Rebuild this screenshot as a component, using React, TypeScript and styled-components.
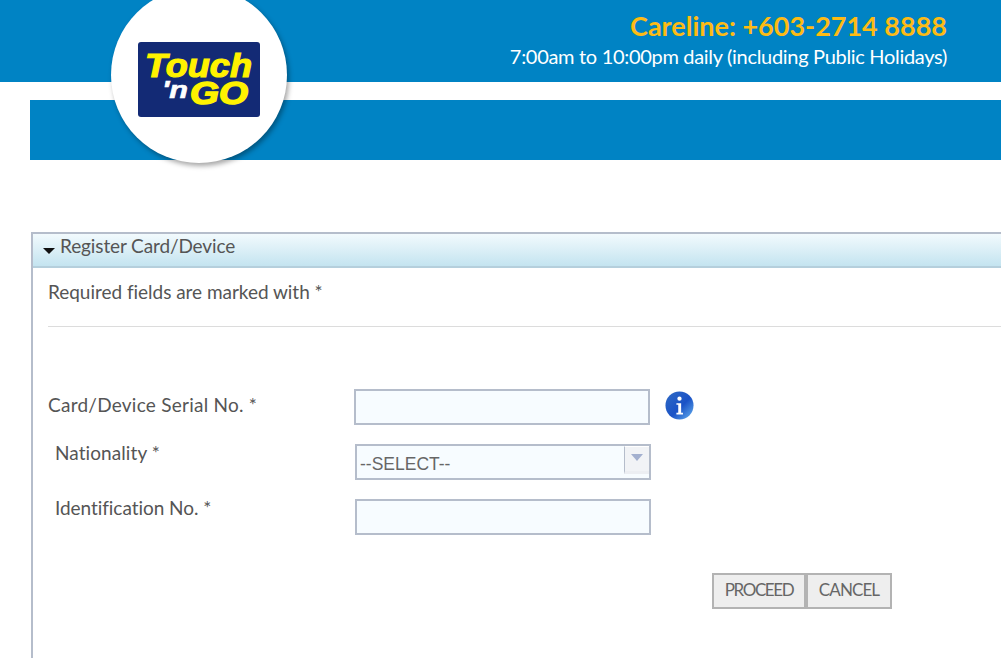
import * as React from 'react';
import styled, { createGlobalStyle } from 'styled-components';

const GlobalStyle = createGlobalStyle`
  html, body {
    margin: 0;
    padding: 0;
    background: #fff;
    overflow: hidden;
  }
`;

const Page = styled.div`
  position: relative;
  width: 1001px;
  height: 658px;
  overflow: hidden;
  font-family: Lato, 'Open Sans', sans-serif;
  color: #555;
`;

const TopBar = styled.header`
  height: 82px;
  box-sizing: border-box;
  background: #0083c4;
  padding: 10px 54px 0 0;
  text-align: right;
`;

const Careline = styled.div`
  color: #fdbb14;
  font-size: 27px;
  font-weight: 700;
  line-height: 31px;
  letter-spacing: 0;
`;

const Hours = styled.div`
  color: #fff;
  font-size: 20px;
  line-height: 26px;
  margin-top: 2px;
  letter-spacing: -0.31px;
`;

const NavBand = styled.div`
  height: 60px;
  margin: 18px 0 0 30px;
  background: #0083c4;
`;

const LogoBadge = styled.div`
  position: absolute;
  left: 111px;
  top: -13px;
  width: 176px;
  height: 176px;
  border-radius: 50%;
  background: #fff;
  box-shadow: 2px 3px 5px rgba(0, 0, 0, 0.35);
  display: flex;
  align-items: center;
  justify-content: center;
`;

const Panel = styled.section`
  width: 1100px;
  height: 440px;
  box-sizing: border-box;
  margin: 72px 0 0 31px;
  border-left: 2px solid #b5bdcb;
  border-top: 2px solid #b5bdcb;
`;

const PanelHeader = styled.div`
  height: 34px;
  box-sizing: border-box;
  padding: 0 0 10px 10px;
  display: flex;
  align-items: center;
  gap: 5px;
  font-size: 19px;
  letter-spacing: -0.12px;
  background: linear-gradient(#f2fafd, #c4e4f0);
  border-bottom: 2px solid #b5cfdc;
`;

const Caret = styled.span`
  width: 0;
  height: 0;
  margin-top: 11px;
  border-left: 6px solid transparent;
  border-right: 6px solid transparent;
  border-top: 6px solid #111;
`;

const PanelBody = styled.div`
  padding-left: 15px;
`;

const Notice = styled.div`
  height: 59px;
  box-sizing: border-box;
  padding-top: 11px;
  font-size: 19px;
  line-height: 26px;
  letter-spacing: -0.03px;
  border-bottom: 1px solid #dcdcdc;
`;

const Form = styled.div`
  margin-top: 62px;
  display: flex;
  flex-direction: column;
  gap: 19px;
`;

const Row = styled.div`
  display: flex;
  align-items: flex-start;
  height: 36px;
`;

const Label = styled.label<{ $indent?: boolean; $spacing: number }>`
  box-sizing: border-box;
  width: ${(p) => (p.$indent ? 307 : 306)}px;
  padding-left: ${(p) => (p.$indent ? 7 : 0)}px;
  font-size: 19px;
  line-height: ${(p) => (p.$indent ? 17 : 31)}px;
  letter-spacing: ${(p) => p.$spacing}px;
`;

const TextInput = styled.input`
  width: 296px;
  height: 36px;
  box-sizing: border-box;
  border: 2px solid #b5bdcb;
  background: #f7fcff;
  padding: 0 4px;
  outline: none;
`;

const InfoIcon = styled.svg`
  margin: 2px 0 0 15px;
  flex: none;
`;

const SelectBox = styled.div`
  position: relative;
  width: 296px;
  height: 36px;
  box-sizing: border-box;
  border: 2px solid #b5bdcb;
  background: #f7fcff;
  padding: 7px 0 0 3px;
  font-family: 'Liberation Sans', Arial, sans-serif;
  font-size: 17.5px;
  line-height: 22px;
  color: #666;
`;

const SelectArrow = styled.div`
  position: absolute;
  top: 0;
  right: 0;
  width: 25px;
  height: 28px;
  box-sizing: border-box;
  border-left: 1px solid #b5bdcb;
  border-bottom: 3px solid #eceef2;
  background: #f1f3f6;
  border-top: 1px solid #fff;
  display: flex;
  justify-content: center;
  padding-top: 7px;

  &::after {
    content: '';
    width: 0;
    height: 0;
    border-left: 6px solid transparent;
    border-right: 6px solid transparent;
    border-top: 7px solid #a3b0cf;
  }
`;

const Actions = styled.div`
  display: flex;
  margin: 38px 0 0 664px;
`;

const ActionButton = styled.button<{ $w: number; $spacing: number }>`
  height: 36px;
  box-sizing: border-box;
  border: 2px solid #b3b3b3;
  background: #eeeeee;
  color: #666;
  font-family: Lato, 'Open Sans', sans-serif;
  font-size: 17px;
  letter-spacing: ${(p) => p.$spacing}px;
  padding: 0 0 3px;
  width: ${(p) => p.$w}px;
`;

function TngLogo() {
  return (
    <svg width="122" height="75" viewBox="0 0 122 75" style={{ marginTop: 8 }}>
      <rect x="0" y="0" width="122" height="75" rx="3" fill="#132a75" />
      <text x="7" y="35" fontFamily="'Liberation Sans', sans-serif" fontWeight="700" fontStyle="italic" fontSize="34" fill="#fff200" stroke="#fff200" strokeWidth="1.2" textLength="107" lengthAdjust="spacingAndGlyphs">
        Touch
      </text>
      <text x="24" y="56" fontFamily="'Liberation Sans', sans-serif" fontWeight="700" fontStyle="italic" fontSize="23" fill="#fff" stroke="#fff" strokeWidth="0.6" textLength="26" lengthAdjust="spacingAndGlyphs">
        'n
      </text>
      <text x="52" y="62" fontFamily="'Liberation Sans', sans-serif" fontWeight="700" fontStyle="italic" fontSize="32" fill="#fff200" stroke="#fff200" strokeWidth="1.5" textLength="58" lengthAdjust="spacingAndGlyphs">
        GO
      </text>
    </svg>
  );
}

function Info() {
  return (
    <InfoIcon width="29" height="29" viewBox="0 0 30 30">
      <defs>
        <linearGradient id="infoFill" x1="0" y1="0" x2="1" y2="1">
          <stop offset="0" stopColor="#2f6ac4" />
          <stop offset="0.55" stopColor="#1a52c6" />
          <stop offset="1" stopColor="#68b4f0" />
        </linearGradient>
      </defs>
      <circle cx="15" cy="15" r="14.5" fill="url(#infoFill)" />
      <circle cx="15" cy="8" r="2.2" fill="#fff" />
      <path d="M11.8 12.6h4.9v10h1.9v1.7h-6.8v-1.7h1.9v-8.3h-1.9z" fill="#fff" />
    </InfoIcon>
  );
}

export default function App() {
  return (
    <Page>
      <GlobalStyle />
      <TopBar>
        <Careline>Careline: +603-2714 8888</Careline>
        <Hours>7:00am to 10:00pm daily (including Public Holidays)</Hours>
      </TopBar>
      <NavBand />
      <LogoBadge>
        <TngLogo />
      </LogoBadge>
      <Panel>
        <PanelHeader>
          <Caret />
          Register Card/Device
        </PanelHeader>
        <PanelBody>
          <Notice>Required fields are marked with *</Notice>
          <Form>
            <Row>
              <Label $spacing={0.25}>Card/Device Serial No. *</Label>
              <TextInput />
              <Info />
            </Row>
            <Row>
              <Label $indent $spacing={0.08}>Nationality *</Label>
              <SelectBox>
                --SELECT--
                <SelectArrow />
              </SelectBox>
            </Row>
            <Row>
              <Label $indent $spacing={-0.05}>Identification No. *</Label>
              <TextInput />
            </Row>
          </Form>
          <Actions>
            <ActionButton $w={94} $spacing={-1.4}>PROCEED</ActionButton>
            <ActionButton $w={86} $spacing={-0.9}>CANCEL</ActionButton>
          </Actions>
        </PanelBody>
      </Panel>
    </Page>
  );
}
